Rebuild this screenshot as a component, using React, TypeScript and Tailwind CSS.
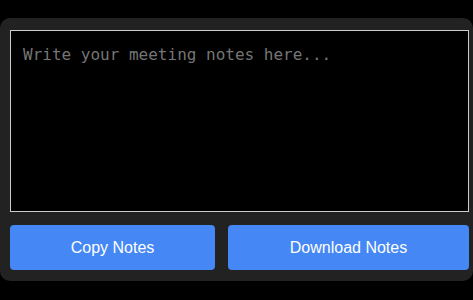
export default function App() {
  return (
    <div className="min-h-[300px] bg-black pt-[18px]">
      <div className="w-[473px] rounded-[10px] bg-[#222222] pl-[10px] pt-[12px] pb-[11px]">
        <textarea
          placeholder="Write your meeting notes here..."
          className="block h-[182px] w-[459px] resize-none border border-[#cccccc] bg-black p-[12px] text-[16px] text-white placeholder:text-[#757575] outline-none"
          style={{ fontFamily: "'DejaVu Sans Mono', monospace" }}
        />
        <div className="mt-[13px] flex gap-[13px]">
          <button
            className="h-[45px] w-[205px] rounded-[4px] bg-[#4487f5] text-[16px] text-white"
            style={{ fontFamily: "'Liberation Sans', Arial, sans-serif" }}
          >
            Copy Notes
          </button>
          <button
            className="h-[45px] w-[241px] rounded-[4px] bg-[#4487f5] text-[16px] text-white"
            style={{ fontFamily: "'Liberation Sans', Arial, sans-serif" }}
          >
            Download Notes
          </button>
        </div>
      </div>
    </div>
  );
}
